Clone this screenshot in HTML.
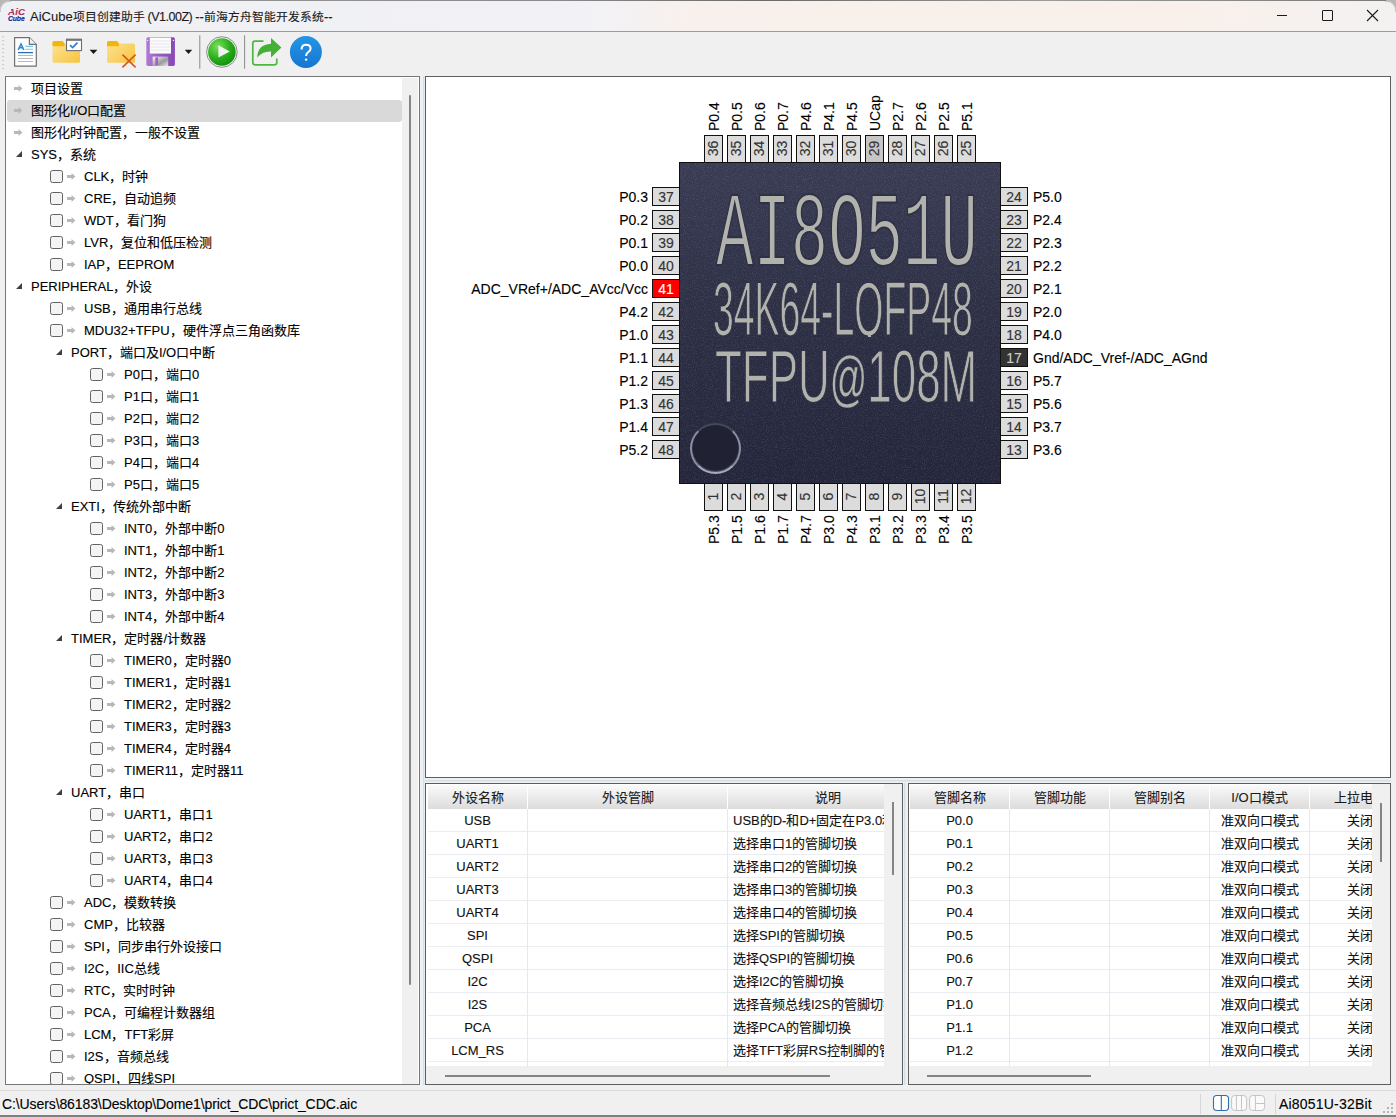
<!DOCTYPE html><html lang="zh-CN"><head><meta charset="utf-8"><style>
*{margin:0;padding:0;box-sizing:border-box}
html,body{width:1396px;height:1117px;overflow:hidden;background:#f0f0f0;font-family:"Liberation Sans",sans-serif;color:#000;-webkit-text-stroke-width:0.12px}
.abs{position:absolute}
#title{position:absolute;left:0;top:0;width:1396px;height:32px;background:linear-gradient(90deg,#eff0f4 0%,#f2f2f6 42%,#f8f0ec 50%,#f9f0eb 85%,#f3f1f1 100%);border-bottom:1px solid #9c9c9c}
.tt{position:absolute;left:30px;top:9px;font-size:13px;line-height:16px;white-space:nowrap;color:#1a1a1a}
.tc{font-size:11.8px}
.panel{position:absolute;background:#fff;border:1px solid #5e5e5e;overflow:hidden}
.row{position:absolute;height:22px;line-height:22px;font-size:13px;white-space:nowrap}
.txt{position:absolute;top:0;white-space:nowrap;font-size:13px;line-height:22px}
.cb{position:absolute;width:13px;height:13px;border:1px solid #626262;border-radius:2.5px;background:#f4f4f4;top:4px}
.arr{position:absolute;top:7px;width:9px;height:7px}
.tri{position:absolute;top:7px;width:0;height:0;border-style:solid;border-width:0 0 6px 6px;border-color:transparent transparent #404040 transparent}
.pin{position:absolute;border:1px solid #111;background:#dcdcdc;color:#333;font-size:14px;text-align:center}
.pl{position:absolute;font-size:14px;white-space:nowrap;line-height:16px;letter-spacing:0}
.hdr{position:absolute;top:1px;height:24px;background:linear-gradient(#fafafa,#dcdcdc);font-size:13px;line-height:26px;text-align:center;white-space:nowrap;overflow:hidden;color:#1a1a1a}
.cell{position:absolute;height:23px;line-height:22px;font-size:13px;white-space:nowrap;overflow:hidden;color:#111}
.gh{position:absolute;height:1px;background:#e9edf2}
.gv{position:absolute;width:1px;background:#e4e8ef}
</style></head><body>
<div id="title">
<div class="abs" style="left:8px;top:7px;font-style:italic;font-weight:bold;font-size:9.6px;line-height:10px;color:#b42c58;letter-spacing:0.2px">AiC</div>
<div class="abs" style="left:8px;top:15px;font-style:italic;font-weight:bold;font-size:6.8px;line-height:8px;color:#1a1a8a;letter-spacing:-0.1px">Cube</div>
<div class="tt">AiCube<span class="tc">项目创建助手</span><span style="font-size:12.5px;letter-spacing:-0.5px"> (V1.00Z) </span>--<span class="tc">前海方舟智能开发系统</span>--</div>
<div class="abs" style="left:1277px;top:15px;width:10px;height:1px;background:#1a1a1a"></div>
<div class="abs" style="left:1322px;top:10px;width:11px;height:11px;border:1px solid #1a1a1a;border-radius:1px"></div>
<svg class="abs" style="left:1366px;top:9px" width="13" height="13"><path d="M1 1L12 12M12 1L1 12" stroke="#1a1a1a" stroke-width="1.1"/></svg>
<div class="abs" style="left:0;top:0;width:1396px;height:1px;background:linear-gradient(90deg,#9a9a9a,#8a8a8a 40%,#6a6a6a 55%,#9a9a9a 75%,#7a7a7a)"></div>
<div class="abs" style="left:1386px;top:0;width:10px;height:10px;background:#b8b8b8"></div>
<div class="abs" style="left:0;top:0;width:10px;height:10px;background:#b8b8b8"></div>
<div class="abs" style="left:0;top:1px;width:11px;height:11px;border-top-left-radius:9px;border-top:1px solid #c8c8c8;border-left:1px solid #c8c8c8;background:#eff0f4"></div>
<div class="abs" style="left:1385px;top:1px;width:11px;height:11px;border-top-right-radius:9px;border-top:1px solid #c8c8c8;border-right:1px solid #c8c8c8;background:#f3f0f0"></div>
</div>
<svg class="abs" style="left:0;top:32px" width="340" height="44" viewBox="0 32 340 44">
<defs>
<linearGradient id="fold" x1="0" y1="0" x2="1" y2="1"><stop offset="0" stop-color="#fde49a"/><stop offset="1" stop-color="#f7c43c"/></linearGradient>
<radialGradient id="grn" cx="0.35" cy="0.3" r="0.8"><stop offset="0" stop-color="#7be05a"/><stop offset="0.55" stop-color="#2aae1c"/><stop offset="1" stop-color="#108a0a"/></radialGradient>
<linearGradient id="blu" x1="0" y1="0" x2="0" y2="1"><stop offset="0" stop-color="#2596e6"/><stop offset="1" stop-color="#1676cf"/></linearGradient>
<linearGradient id="pur" x1="0" y1="0" x2="1" y2="0"><stop offset="0" stop-color="#b07ad6"/><stop offset="0.5" stop-color="#9558c2"/><stop offset="1" stop-color="#8848b8"/></linearGradient>
<linearGradient id="shut" x1="0" y1="0" x2="1" y2="1"><stop offset="0" stop-color="#f4f4f4"/><stop offset="0.6" stop-color="#9a9a9a"/><stop offset="1" stop-color="#e8e8e8"/></linearGradient>
</defs>
<g fill="#b8b8b8"><rect x="2.5" y="36" width="1.2" height="1.2"/><rect x="2.5" y="40" width="1.2" height="1.2"/><rect x="2.5" y="44" width="1.2" height="1.2"/><rect x="2.5" y="48" width="1.2" height="1.2"/><rect x="2.5" y="52" width="1.2" height="1.2"/><rect x="2.5" y="56" width="1.2" height="1.2"/><rect x="2.5" y="60" width="1.2" height="1.2"/><rect x="2.5" y="64" width="1.2" height="1.2"/><rect x="2.5" y="68" width="1.2" height="1.2"/></g>
<!-- new doc -->
<path d="M14.6 37.6H29.4L36.3 44.4V66.2H14.6Z" fill="#fff" stroke="#707070" stroke-width="1.2"/>
<path d="M29.4 37.6V44.4H36.3" fill="#f0f0f0" stroke="#707070" stroke-width="1.2"/>
<path d="M18.2 49.9L21 44L23.8 49.9M19.3 47.8H22.7" fill="none" stroke="#2f86d4" stroke-width="1.5"/>
<g stroke-width="1.1"><path d="M25.3 46.4H33M25.3 49.3H33" stroke="#7cc8ee"/><path d="M18 52.6H33" stroke="#2a6cb4" stroke-width="1.3"/><path d="M18 55.5H33M18 58.5H33M18 61.5H33" stroke="#b8b8b8"/></g>
<!-- folder check -->
<path d="M52.5 42.5Q52.5 41 54 41H62.5L64.5 43.5H78.5Q80 43.5 80 45V61.5Q80 62.8 78.5 62.8H54Q52.5 62.8 52.5 61.5Z" fill="url(#fold)"/>
<path d="M52.5 42.5Q52.5 41 54 41H62.5L64.5 43.5V46.3H52.5Z" fill="#f3b40c"/>
<rect x="66.5" y="39.2" width="15" height="11.4" fill="#fff" stroke="#6e6e6e" stroke-width="1.1"/>
<rect x="66.5" y="39.2" width="15" height="1.6" fill="#6e6e6e"/>
<path d="M70 45.2L72.6 47.6L77.5 42.6" fill="none" stroke="#2a7fd0" stroke-width="1.6"/>
<path d="M89.6 49.8H97.4L93.5 54Z" fill="#1a1a1a"/>
<!-- folder x -->
<path d="M107 42.5Q107 41 108.5 41H117L119 43.5H133.5Q135 43.5 135 45V61.5Q135 62.8 133.5 62.8H108.5Q107 62.8 107 61.5Z" fill="url(#fold)"/>
<path d="M107 42.5Q107 41 108.5 41H117L119 43.5V46.3H107Z" fill="#f3b40c"/>
<path d="M122.4 54.7L135.6 67.3M135.6 54.7L122.4 67.3" stroke="#d8551e" stroke-width="1.6"/>
<!-- floppy -->
<rect x="146.3" y="37.2" width="28.6" height="28.8" rx="1.8" fill="url(#pur)"/>
<rect x="149.8" y="37.6" width="21.2" height="16" fill="#fbfbfb"/>
<g stroke="#e2e2ea" stroke-width="0.8"><path d="M150.5 41H170.3M150.5 44H170.3M150.5 47H170.3M150.5 50H170.3"/></g>
<rect x="152.6" y="56.6" width="15.6" height="9.4" fill="url(#shut)"/>
<rect x="155.4" y="57.4" width="2.6" height="7.6" fill="#9a62c6"/>
<circle cx="147.7" cy="40.4" r="0.6" fill="#fff"/><circle cx="173.3" cy="40.4" r="0.6" fill="#fff"/>
<path d="M184.8 49.8H192.2L188.5 53.9Z" fill="#1a1a1a"/>
<rect x="199.3" y="35.3" width="1" height="33.4" fill="#8a8a8a"/>
<!-- play -->
<circle cx="221.9" cy="52" r="15.3" fill="#f4f4f4" stroke="#8a8a8a" stroke-width="1"/>
<circle cx="221.9" cy="52" r="13.8" fill="url(#grn)"/>
<path d="M218.4 45.2L229.8 51.4L218.4 57.6Z" fill="#f2f2f2"/>
<rect x="244.1" y="35.3" width="1" height="33.4" fill="#8a8a8a"/>
<!-- share -->
<path d="M263.5 41.2H255Q252.8 41.2 252.8 43.4V62.6Q252.8 64.8 255 64.8H274.6Q276.8 64.8 276.8 62.6V58.6" fill="none" stroke="#4cb83e" stroke-width="1.7"/>
<path d="M257.2 57.6Q257.6 44.6 271 43.8V38L281.4 47.6L271 57.4V51.4Q262.4 51 257.2 57.6Z" fill="#44b036"/>
<!-- help -->
<circle cx="305.9" cy="52" r="16" fill="url(#blu)"/>
<path d="M301.6 49.4Q301.6 44.8 306 44.8Q310.6 44.8 310.6 48.6Q310.6 50.8 308.2 52.2Q306.1 53.4 306.1 56" fill="none" stroke="#fff" stroke-width="2"/>
<circle cx="306.1" cy="59.6" r="1.2" fill="#fff"/>
</svg>
<svg class="abs" style="left:1205px;top:1090px" width="70" height="25" viewBox="1205 1090 70 25">
<rect x="1213.5" y="1095.5" width="15" height="15" rx="3.2" fill="#fff" stroke="#2c6fb2" stroke-width="1.1"/><path d="M1221.3 1095.5V1110.5" stroke="#2c6fb2" stroke-width="1.1"/>
<rect x="1231.6" y="1095.5" width="15" height="15" rx="3.2" fill="#fafafa" stroke="#c4c4c4" stroke-width="1"/><path d="M1236.4 1095.5V1110.5M1241.5 1095.5V1110.5" stroke="#c4c4c4" stroke-width="1"/>
<rect x="1249.6" y="1095.5" width="15" height="15" rx="3.2" fill="#fafafa" stroke="#c4c4c4" stroke-width="1"/><path d="M1255.4 1095.5V1110.5M1255.4 1103.5H1264.6" stroke="#c4c4c4" stroke-width="1"/>
</svg>
<svg class="abs" style="left:1380px;top:1100px" width="16" height="16"><g fill="#b4b4b4"><rect x="11" y="3" width="2" height="2"/><rect x="7" y="7" width="2" height="2"/><rect x="11" y="7" width="2" height="2"/><rect x="3" y="11" width="2" height="2"/><rect x="7" y="11" width="2" height="2"/><rect x="11" y="11" width="2" height="2"/></g></svg>
<div class="panel" style="left:5px;top:76px;width:415px;height:1009px;border-color:#76767a">
<div class="row" style="left:0;top:1px;width:400px">
<svg class="arr" style="left:8px" width="9" height="7" viewBox="0 0 9 7"><path d="M0 2H4.6V0L8.4 3.5L4.6 7V5H0Z" fill="#b8b8b8"/></svg>
<div class="txt" style="left:25px">项目设置</div>
</div>
<div class="abs" style="left:1px;top:23px;width:395px;height:22px;background:#d9d9d9;border-radius:3px"></div>
<div class="row" style="left:0;top:23px;width:400px">
<svg class="arr" style="left:8px" width="9" height="7" viewBox="0 0 9 7"><path d="M0 2H4.6V0L8.4 3.5L4.6 7V5H0Z" fill="#b8b8b8"/></svg>
<div class="txt" style="left:25px">图形化I/O口配置</div>
</div>
<div class="row" style="left:0;top:45px;width:400px">
<svg class="arr" style="left:8px" width="9" height="7" viewBox="0 0 9 7"><path d="M0 2H4.6V0L8.4 3.5L4.6 7V5H0Z" fill="#b8b8b8"/></svg>
<div class="txt" style="left:25px">图形化时钟配置，一般不设置</div>
</div>
<div class="row" style="left:0;top:67px;width:400px">
<div class="tri" style="left:10px"></div>
<div class="txt" style="left:25px">SYS，系统</div>
</div>
<div class="row" style="left:0;top:89px;width:400px">
<div class="cb" style="left:44px"></div>
<svg class="arr" style="left:61px" width="9" height="7" viewBox="0 0 9 7"><path d="M0 2H4.6V0L8.4 3.5L4.6 7V5H0Z" fill="#b8b8b8"/></svg>
<div class="txt" style="left:78px">CLK，时钟</div>
</div>
<div class="row" style="left:0;top:111px;width:400px">
<div class="cb" style="left:44px"></div>
<svg class="arr" style="left:61px" width="9" height="7" viewBox="0 0 9 7"><path d="M0 2H4.6V0L8.4 3.5L4.6 7V5H0Z" fill="#b8b8b8"/></svg>
<div class="txt" style="left:78px">CRE，自动追频</div>
</div>
<div class="row" style="left:0;top:133px;width:400px">
<div class="cb" style="left:44px"></div>
<svg class="arr" style="left:61px" width="9" height="7" viewBox="0 0 9 7"><path d="M0 2H4.6V0L8.4 3.5L4.6 7V5H0Z" fill="#b8b8b8"/></svg>
<div class="txt" style="left:78px">WDT，看门狗</div>
</div>
<div class="row" style="left:0;top:155px;width:400px">
<div class="cb" style="left:44px"></div>
<svg class="arr" style="left:61px" width="9" height="7" viewBox="0 0 9 7"><path d="M0 2H4.6V0L8.4 3.5L4.6 7V5H0Z" fill="#b8b8b8"/></svg>
<div class="txt" style="left:78px">LVR，复位和低压检测</div>
</div>
<div class="row" style="left:0;top:177px;width:400px">
<div class="cb" style="left:44px"></div>
<svg class="arr" style="left:61px" width="9" height="7" viewBox="0 0 9 7"><path d="M0 2H4.6V0L8.4 3.5L4.6 7V5H0Z" fill="#b8b8b8"/></svg>
<div class="txt" style="left:78px">IAP，EEPROM</div>
</div>
<div class="row" style="left:0;top:199px;width:400px">
<div class="tri" style="left:10px"></div>
<div class="txt" style="left:25px">PERIPHERAL，外设</div>
</div>
<div class="row" style="left:0;top:221px;width:400px">
<div class="cb" style="left:44px"></div>
<svg class="arr" style="left:61px" width="9" height="7" viewBox="0 0 9 7"><path d="M0 2H4.6V0L8.4 3.5L4.6 7V5H0Z" fill="#b8b8b8"/></svg>
<div class="txt" style="left:78px">USB，通用串行总线</div>
</div>
<div class="row" style="left:0;top:243px;width:400px">
<div class="cb" style="left:44px"></div>
<svg class="arr" style="left:61px" width="9" height="7" viewBox="0 0 9 7"><path d="M0 2H4.6V0L8.4 3.5L4.6 7V5H0Z" fill="#b8b8b8"/></svg>
<div class="txt" style="left:78px">MDU32+TFPU，硬件浮点三角函数库</div>
</div>
<div class="row" style="left:0;top:265px;width:400px">
<div class="tri" style="left:50px"></div>
<div class="txt" style="left:65px">PORT，端口及I/O口中断</div>
</div>
<div class="row" style="left:0;top:287px;width:400px">
<div class="cb" style="left:84px"></div>
<svg class="arr" style="left:101px" width="9" height="7" viewBox="0 0 9 7"><path d="M0 2H4.6V0L8.4 3.5L4.6 7V5H0Z" fill="#b8b8b8"/></svg>
<div class="txt" style="left:118px">P0口，端口0</div>
</div>
<div class="row" style="left:0;top:309px;width:400px">
<div class="cb" style="left:84px"></div>
<svg class="arr" style="left:101px" width="9" height="7" viewBox="0 0 9 7"><path d="M0 2H4.6V0L8.4 3.5L4.6 7V5H0Z" fill="#b8b8b8"/></svg>
<div class="txt" style="left:118px">P1口，端口1</div>
</div>
<div class="row" style="left:0;top:331px;width:400px">
<div class="cb" style="left:84px"></div>
<svg class="arr" style="left:101px" width="9" height="7" viewBox="0 0 9 7"><path d="M0 2H4.6V0L8.4 3.5L4.6 7V5H0Z" fill="#b8b8b8"/></svg>
<div class="txt" style="left:118px">P2口，端口2</div>
</div>
<div class="row" style="left:0;top:353px;width:400px">
<div class="cb" style="left:84px"></div>
<svg class="arr" style="left:101px" width="9" height="7" viewBox="0 0 9 7"><path d="M0 2H4.6V0L8.4 3.5L4.6 7V5H0Z" fill="#b8b8b8"/></svg>
<div class="txt" style="left:118px">P3口，端口3</div>
</div>
<div class="row" style="left:0;top:375px;width:400px">
<div class="cb" style="left:84px"></div>
<svg class="arr" style="left:101px" width="9" height="7" viewBox="0 0 9 7"><path d="M0 2H4.6V0L8.4 3.5L4.6 7V5H0Z" fill="#b8b8b8"/></svg>
<div class="txt" style="left:118px">P4口，端口4</div>
</div>
<div class="row" style="left:0;top:397px;width:400px">
<div class="cb" style="left:84px"></div>
<svg class="arr" style="left:101px" width="9" height="7" viewBox="0 0 9 7"><path d="M0 2H4.6V0L8.4 3.5L4.6 7V5H0Z" fill="#b8b8b8"/></svg>
<div class="txt" style="left:118px">P5口，端口5</div>
</div>
<div class="row" style="left:0;top:419px;width:400px">
<div class="tri" style="left:50px"></div>
<div class="txt" style="left:65px">EXTI，传统外部中断</div>
</div>
<div class="row" style="left:0;top:441px;width:400px">
<div class="cb" style="left:84px"></div>
<svg class="arr" style="left:101px" width="9" height="7" viewBox="0 0 9 7"><path d="M0 2H4.6V0L8.4 3.5L4.6 7V5H0Z" fill="#b8b8b8"/></svg>
<div class="txt" style="left:118px">INT0，外部中断0</div>
</div>
<div class="row" style="left:0;top:463px;width:400px">
<div class="cb" style="left:84px"></div>
<svg class="arr" style="left:101px" width="9" height="7" viewBox="0 0 9 7"><path d="M0 2H4.6V0L8.4 3.5L4.6 7V5H0Z" fill="#b8b8b8"/></svg>
<div class="txt" style="left:118px">INT1，外部中断1</div>
</div>
<div class="row" style="left:0;top:485px;width:400px">
<div class="cb" style="left:84px"></div>
<svg class="arr" style="left:101px" width="9" height="7" viewBox="0 0 9 7"><path d="M0 2H4.6V0L8.4 3.5L4.6 7V5H0Z" fill="#b8b8b8"/></svg>
<div class="txt" style="left:118px">INT2，外部中断2</div>
</div>
<div class="row" style="left:0;top:507px;width:400px">
<div class="cb" style="left:84px"></div>
<svg class="arr" style="left:101px" width="9" height="7" viewBox="0 0 9 7"><path d="M0 2H4.6V0L8.4 3.5L4.6 7V5H0Z" fill="#b8b8b8"/></svg>
<div class="txt" style="left:118px">INT3，外部中断3</div>
</div>
<div class="row" style="left:0;top:529px;width:400px">
<div class="cb" style="left:84px"></div>
<svg class="arr" style="left:101px" width="9" height="7" viewBox="0 0 9 7"><path d="M0 2H4.6V0L8.4 3.5L4.6 7V5H0Z" fill="#b8b8b8"/></svg>
<div class="txt" style="left:118px">INT4，外部中断4</div>
</div>
<div class="row" style="left:0;top:551px;width:400px">
<div class="tri" style="left:50px"></div>
<div class="txt" style="left:65px">TIMER，定时器/计数器</div>
</div>
<div class="row" style="left:0;top:573px;width:400px">
<div class="cb" style="left:84px"></div>
<svg class="arr" style="left:101px" width="9" height="7" viewBox="0 0 9 7"><path d="M0 2H4.6V0L8.4 3.5L4.6 7V5H0Z" fill="#b8b8b8"/></svg>
<div class="txt" style="left:118px">TIMER0，定时器0</div>
</div>
<div class="row" style="left:0;top:595px;width:400px">
<div class="cb" style="left:84px"></div>
<svg class="arr" style="left:101px" width="9" height="7" viewBox="0 0 9 7"><path d="M0 2H4.6V0L8.4 3.5L4.6 7V5H0Z" fill="#b8b8b8"/></svg>
<div class="txt" style="left:118px">TIMER1，定时器1</div>
</div>
<div class="row" style="left:0;top:617px;width:400px">
<div class="cb" style="left:84px"></div>
<svg class="arr" style="left:101px" width="9" height="7" viewBox="0 0 9 7"><path d="M0 2H4.6V0L8.4 3.5L4.6 7V5H0Z" fill="#b8b8b8"/></svg>
<div class="txt" style="left:118px">TIMER2，定时器2</div>
</div>
<div class="row" style="left:0;top:639px;width:400px">
<div class="cb" style="left:84px"></div>
<svg class="arr" style="left:101px" width="9" height="7" viewBox="0 0 9 7"><path d="M0 2H4.6V0L8.4 3.5L4.6 7V5H0Z" fill="#b8b8b8"/></svg>
<div class="txt" style="left:118px">TIMER3，定时器3</div>
</div>
<div class="row" style="left:0;top:661px;width:400px">
<div class="cb" style="left:84px"></div>
<svg class="arr" style="left:101px" width="9" height="7" viewBox="0 0 9 7"><path d="M0 2H4.6V0L8.4 3.5L4.6 7V5H0Z" fill="#b8b8b8"/></svg>
<div class="txt" style="left:118px">TIMER4，定时器4</div>
</div>
<div class="row" style="left:0;top:683px;width:400px">
<div class="cb" style="left:84px"></div>
<svg class="arr" style="left:101px" width="9" height="7" viewBox="0 0 9 7"><path d="M0 2H4.6V0L8.4 3.5L4.6 7V5H0Z" fill="#b8b8b8"/></svg>
<div class="txt" style="left:118px">TIMER11，定时器11</div>
</div>
<div class="row" style="left:0;top:705px;width:400px">
<div class="tri" style="left:50px"></div>
<div class="txt" style="left:65px">UART，串口</div>
</div>
<div class="row" style="left:0;top:727px;width:400px">
<div class="cb" style="left:84px"></div>
<svg class="arr" style="left:101px" width="9" height="7" viewBox="0 0 9 7"><path d="M0 2H4.6V0L8.4 3.5L4.6 7V5H0Z" fill="#b8b8b8"/></svg>
<div class="txt" style="left:118px">UART1，串口1</div>
</div>
<div class="row" style="left:0;top:749px;width:400px">
<div class="cb" style="left:84px"></div>
<svg class="arr" style="left:101px" width="9" height="7" viewBox="0 0 9 7"><path d="M0 2H4.6V0L8.4 3.5L4.6 7V5H0Z" fill="#b8b8b8"/></svg>
<div class="txt" style="left:118px">UART2，串口2</div>
</div>
<div class="row" style="left:0;top:771px;width:400px">
<div class="cb" style="left:84px"></div>
<svg class="arr" style="left:101px" width="9" height="7" viewBox="0 0 9 7"><path d="M0 2H4.6V0L8.4 3.5L4.6 7V5H0Z" fill="#b8b8b8"/></svg>
<div class="txt" style="left:118px">UART3，串口3</div>
</div>
<div class="row" style="left:0;top:793px;width:400px">
<div class="cb" style="left:84px"></div>
<svg class="arr" style="left:101px" width="9" height="7" viewBox="0 0 9 7"><path d="M0 2H4.6V0L8.4 3.5L4.6 7V5H0Z" fill="#b8b8b8"/></svg>
<div class="txt" style="left:118px">UART4，串口4</div>
</div>
<div class="row" style="left:0;top:815px;width:400px">
<div class="cb" style="left:44px"></div>
<svg class="arr" style="left:61px" width="9" height="7" viewBox="0 0 9 7"><path d="M0 2H4.6V0L8.4 3.5L4.6 7V5H0Z" fill="#b8b8b8"/></svg>
<div class="txt" style="left:78px">ADC，模数转换</div>
</div>
<div class="row" style="left:0;top:837px;width:400px">
<div class="cb" style="left:44px"></div>
<svg class="arr" style="left:61px" width="9" height="7" viewBox="0 0 9 7"><path d="M0 2H4.6V0L8.4 3.5L4.6 7V5H0Z" fill="#b8b8b8"/></svg>
<div class="txt" style="left:78px">CMP，比较器</div>
</div>
<div class="row" style="left:0;top:859px;width:400px">
<div class="cb" style="left:44px"></div>
<svg class="arr" style="left:61px" width="9" height="7" viewBox="0 0 9 7"><path d="M0 2H4.6V0L8.4 3.5L4.6 7V5H0Z" fill="#b8b8b8"/></svg>
<div class="txt" style="left:78px">SPI，同步串行外设接口</div>
</div>
<div class="row" style="left:0;top:881px;width:400px">
<div class="cb" style="left:44px"></div>
<svg class="arr" style="left:61px" width="9" height="7" viewBox="0 0 9 7"><path d="M0 2H4.6V0L8.4 3.5L4.6 7V5H0Z" fill="#b8b8b8"/></svg>
<div class="txt" style="left:78px">I2C，IIC总线</div>
</div>
<div class="row" style="left:0;top:903px;width:400px">
<div class="cb" style="left:44px"></div>
<svg class="arr" style="left:61px" width="9" height="7" viewBox="0 0 9 7"><path d="M0 2H4.6V0L8.4 3.5L4.6 7V5H0Z" fill="#b8b8b8"/></svg>
<div class="txt" style="left:78px">RTC，实时时钟</div>
</div>
<div class="row" style="left:0;top:925px;width:400px">
<div class="cb" style="left:44px"></div>
<svg class="arr" style="left:61px" width="9" height="7" viewBox="0 0 9 7"><path d="M0 2H4.6V0L8.4 3.5L4.6 7V5H0Z" fill="#b8b8b8"/></svg>
<div class="txt" style="left:78px">PCA，可编程计数器组</div>
</div>
<div class="row" style="left:0;top:947px;width:400px">
<div class="cb" style="left:44px"></div>
<svg class="arr" style="left:61px" width="9" height="7" viewBox="0 0 9 7"><path d="M0 2H4.6V0L8.4 3.5L4.6 7V5H0Z" fill="#b8b8b8"/></svg>
<div class="txt" style="left:78px">LCM，TFT彩屏</div>
</div>
<div class="row" style="left:0;top:969px;width:400px">
<div class="cb" style="left:44px"></div>
<svg class="arr" style="left:61px" width="9" height="7" viewBox="0 0 9 7"><path d="M0 2H4.6V0L8.4 3.5L4.6 7V5H0Z" fill="#b8b8b8"/></svg>
<div class="txt" style="left:78px">I2S，音频总线</div>
</div>
<div class="row" style="left:0;top:991px;width:400px">
<div class="cb" style="left:44px"></div>
<svg class="arr" style="left:61px" width="9" height="7" viewBox="0 0 9 7"><path d="M0 2H4.6V0L8.4 3.5L4.6 7V5H0Z" fill="#b8b8b8"/></svg>
<div class="txt" style="left:78px">QSPI，四线SPI</div>
</div>
<div class="abs" style="left:396px;top:1px;width:16px;height:1006px;background:#f0f0f0"></div>
<div class="abs" style="left:403px;top:18px;width:2px;height:890px;background:#858585;border-radius:1px"></div>
</div>
<div class="abs" style="left:423px;top:76px;width:2px;height:1009px;background:linear-gradient(90deg,#c6dae4,#e6f3f9)"></div>
<div class="abs" style="left:425px;top:780px;width:966px;height:2px;background:linear-gradient(#c8d9e2,#e6f2f8)"></div>
<div class="abs" style="left:904px;top:783px;width:2px;height:302px;background:linear-gradient(90deg,#c6dae4,#e6f3f9)"></div>
<div class="panel" style="left:425px;top:76px;width:966px;height:702px">
<div class="abs" style="left:253px;top:85px;width:322px;height:322px;background:linear-gradient(#383b52,#2d3045 45%,#23253a);border:1px solid #111;overflow:hidden">
<svg class="abs" style="left:0;top:0;opacity:0.22" width="320" height="320"><filter id="nz"><feTurbulence type="fractalNoise" baseFrequency="0.9" numOctaves="2" seed="3"/><feColorMatrix values="0 0 0 0 0.75  0 0 0 0 0.77  0 0 0 0 0.9  0 0 0 1.6 -0.75"/></filter><rect width="320" height="320" filter="url(#nz)"/></svg>
<div class="abs" style="left:10px;top:260px;width:51px;height:51px;border-radius:50%;border:2px solid #a8aabb;border-top-color:#454859;border-right-color:#8c8ea0;border-left-color:#8c8ea0;background:#202233;box-shadow:inset 0 -1px 1px rgba(200,200,220,.35)"></div>
<div style="position:absolute;white-space:nowrap;line-height:1;color:#b2b2ac;-webkit-text-stroke:2px #2e3145;transform-origin:0 0;left:36.0px;top:21.4px;font-family:'Liberation Mono',monospace;font-size:106px;transform:scaleX(0.588)">AI8O51U</div>
<div style="position:absolute;white-space:nowrap;line-height:1;color:#b2b2ac;-webkit-text-stroke:2px #2e3145;transform-origin:0 0;left:32.5px;top:108.0px;font-family:'Liberation Sans',sans-serif;font-size:75.7px;height:66px;-webkit-text-stroke-width:1.2px;overflow:hidden;transform:scaleX(0.494)">34K64-LQFP48</div>
<div style="position:absolute;white-space:nowrap;line-height:1;color:#b2b2ac;-webkit-text-stroke:2px #2e3145;transform-origin:0 0;left:35.0px;top:177.2px;font-family:'Liberation Sans',sans-serif;font-size:73.5px;-webkit-text-stroke-width:1.2px;transform:scaleX(0.598)">TFPU<span style="font-size:84%;vertical-align:3px;-webkit-text-stroke-width:0.4px">@</span>108M</div>
</div>
<div class="pin" style="left:278px;top:58px;width:19px;height:28px;"><div class="abs" style="left:-5px;top:4px;width:27px;line-height:17px;transform:rotate(-90deg)">36</div></div>
<div class="pl" style="left:287.5px;top:54px;transform-origin:0 0;transform:rotate(-90deg) translate(0,-8px)">P0.4</div>
<div class="pin" style="left:278px;top:406px;width:19px;height:28px;"><div class="abs" style="left:-5px;top:4px;width:27px;line-height:17px;transform:rotate(-90deg)">1</div></div>
<div class="pl" style="left:287.5px;top:467px;transform-origin:0 0;transform:rotate(-90deg) translate(0,-8px)">P5.3</div>
<div class="pin" style="left:301px;top:58px;width:19px;height:28px;"><div class="abs" style="left:-5px;top:4px;width:27px;line-height:17px;transform:rotate(-90deg)">35</div></div>
<div class="pl" style="left:310.5px;top:54px;transform-origin:0 0;transform:rotate(-90deg) translate(0,-8px)">P0.5</div>
<div class="pin" style="left:301px;top:406px;width:19px;height:28px;"><div class="abs" style="left:-5px;top:4px;width:27px;line-height:17px;transform:rotate(-90deg)">2</div></div>
<div class="pl" style="left:310.5px;top:467px;transform-origin:0 0;transform:rotate(-90deg) translate(0,-8px)">P1.5</div>
<div class="pin" style="left:324px;top:58px;width:19px;height:28px;"><div class="abs" style="left:-5px;top:4px;width:27px;line-height:17px;transform:rotate(-90deg)">34</div></div>
<div class="pl" style="left:333.5px;top:54px;transform-origin:0 0;transform:rotate(-90deg) translate(0,-8px)">P0.6</div>
<div class="pin" style="left:324px;top:406px;width:19px;height:28px;"><div class="abs" style="left:-5px;top:4px;width:27px;line-height:17px;transform:rotate(-90deg)">3</div></div>
<div class="pl" style="left:333.5px;top:467px;transform-origin:0 0;transform:rotate(-90deg) translate(0,-8px)">P1.6</div>
<div class="pin" style="left:347px;top:58px;width:19px;height:28px;"><div class="abs" style="left:-5px;top:4px;width:27px;line-height:17px;transform:rotate(-90deg)">33</div></div>
<div class="pl" style="left:356.5px;top:54px;transform-origin:0 0;transform:rotate(-90deg) translate(0,-8px)">P0.7</div>
<div class="pin" style="left:347px;top:406px;width:19px;height:28px;"><div class="abs" style="left:-5px;top:4px;width:27px;line-height:17px;transform:rotate(-90deg)">4</div></div>
<div class="pl" style="left:356.5px;top:467px;transform-origin:0 0;transform:rotate(-90deg) translate(0,-8px)">P1.7</div>
<div class="pin" style="left:370px;top:58px;width:19px;height:28px;"><div class="abs" style="left:-5px;top:4px;width:27px;line-height:17px;transform:rotate(-90deg)">32</div></div>
<div class="pl" style="left:379.5px;top:54px;transform-origin:0 0;transform:rotate(-90deg) translate(0,-8px)">P4.6</div>
<div class="pin" style="left:370px;top:406px;width:19px;height:28px;"><div class="abs" style="left:-5px;top:4px;width:27px;line-height:17px;transform:rotate(-90deg)">5</div></div>
<div class="pl" style="left:379.5px;top:467px;transform-origin:0 0;transform:rotate(-90deg) translate(0,-8px)">P4.7</div>
<div class="pin" style="left:393px;top:58px;width:19px;height:28px;"><div class="abs" style="left:-5px;top:4px;width:27px;line-height:17px;transform:rotate(-90deg)">31</div></div>
<div class="pl" style="left:402.5px;top:54px;transform-origin:0 0;transform:rotate(-90deg) translate(0,-8px)">P4.1</div>
<div class="pin" style="left:393px;top:406px;width:19px;height:28px;"><div class="abs" style="left:-5px;top:4px;width:27px;line-height:17px;transform:rotate(-90deg)">6</div></div>
<div class="pl" style="left:402.5px;top:467px;transform-origin:0 0;transform:rotate(-90deg) translate(0,-8px)">P3.0</div>
<div class="pin" style="left:416px;top:58px;width:19px;height:28px;"><div class="abs" style="left:-5px;top:4px;width:27px;line-height:17px;transform:rotate(-90deg)">30</div></div>
<div class="pl" style="left:425.5px;top:54px;transform-origin:0 0;transform:rotate(-90deg) translate(0,-8px)">P4.5</div>
<div class="pin" style="left:416px;top:406px;width:19px;height:28px;"><div class="abs" style="left:-5px;top:4px;width:27px;line-height:17px;transform:rotate(-90deg)">7</div></div>
<div class="pl" style="left:425.5px;top:467px;transform-origin:0 0;transform:rotate(-90deg) translate(0,-8px)">P4.3</div>
<div class="pin" style="left:439px;top:58px;width:19px;height:28px;background:#c6c6c6;"><div class="abs" style="left:-5px;top:4px;width:27px;line-height:17px;transform:rotate(-90deg)">29</div></div>
<div class="pl" style="left:448.5px;top:54px;transform-origin:0 0;transform:rotate(-90deg) translate(0,-8px)">UCap</div>
<div class="pin" style="left:439px;top:406px;width:19px;height:28px;"><div class="abs" style="left:-5px;top:4px;width:27px;line-height:17px;transform:rotate(-90deg)">8</div></div>
<div class="pl" style="left:448.5px;top:467px;transform-origin:0 0;transform:rotate(-90deg) translate(0,-8px)">P3.1</div>
<div class="pin" style="left:462px;top:58px;width:19px;height:28px;"><div class="abs" style="left:-5px;top:4px;width:27px;line-height:17px;transform:rotate(-90deg)">28</div></div>
<div class="pl" style="left:471.5px;top:54px;transform-origin:0 0;transform:rotate(-90deg) translate(0,-8px)">P2.7</div>
<div class="pin" style="left:462px;top:406px;width:19px;height:28px;"><div class="abs" style="left:-5px;top:4px;width:27px;line-height:17px;transform:rotate(-90deg)">9</div></div>
<div class="pl" style="left:471.5px;top:467px;transform-origin:0 0;transform:rotate(-90deg) translate(0,-8px)">P3.2</div>
<div class="pin" style="left:485px;top:58px;width:19px;height:28px;"><div class="abs" style="left:-5px;top:4px;width:27px;line-height:17px;transform:rotate(-90deg)">27</div></div>
<div class="pl" style="left:494.5px;top:54px;transform-origin:0 0;transform:rotate(-90deg) translate(0,-8px)">P2.6</div>
<div class="pin" style="left:485px;top:406px;width:19px;height:28px;"><div class="abs" style="left:-5px;top:4px;width:27px;line-height:17px;transform:rotate(-90deg)">10</div></div>
<div class="pl" style="left:494.5px;top:467px;transform-origin:0 0;transform:rotate(-90deg) translate(0,-8px)">P3.3</div>
<div class="pin" style="left:508px;top:58px;width:19px;height:28px;"><div class="abs" style="left:-5px;top:4px;width:27px;line-height:17px;transform:rotate(-90deg)">26</div></div>
<div class="pl" style="left:517.5px;top:54px;transform-origin:0 0;transform:rotate(-90deg) translate(0,-8px)">P2.5</div>
<div class="pin" style="left:508px;top:406px;width:19px;height:28px;"><div class="abs" style="left:-5px;top:4px;width:27px;line-height:17px;transform:rotate(-90deg)">11</div></div>
<div class="pl" style="left:517.5px;top:467px;transform-origin:0 0;transform:rotate(-90deg) translate(0,-8px)">P3.4</div>
<div class="pin" style="left:531px;top:58px;width:19px;height:28px;"><div class="abs" style="left:-5px;top:4px;width:27px;line-height:17px;transform:rotate(-90deg)">25</div></div>
<div class="pl" style="left:540.5px;top:54px;transform-origin:0 0;transform:rotate(-90deg) translate(0,-8px)">P5.1</div>
<div class="pin" style="left:531px;top:406px;width:19px;height:28px;"><div class="abs" style="left:-5px;top:4px;width:27px;line-height:17px;transform:rotate(-90deg)">12</div></div>
<div class="pl" style="left:540.5px;top:467px;transform-origin:0 0;transform:rotate(-90deg) translate(0,-8px)">P3.5</div>
<div class="pin" style="left:226px;top:110px;width:28px;height:19px;line-height:19px;">37</div>
<div class="pl" style="right:742px;top:112px;text-align:right">P0.3</div>
<div class="pin" style="left:574px;top:110px;width:28px;height:19px;line-height:19px;">24</div>
<div class="pl" style="left:607px;top:112px">P5.0</div>
<div class="pin" style="left:226px;top:133px;width:28px;height:19px;line-height:19px;">38</div>
<div class="pl" style="right:742px;top:135px;text-align:right">P0.2</div>
<div class="pin" style="left:574px;top:133px;width:28px;height:19px;line-height:19px;">23</div>
<div class="pl" style="left:607px;top:135px">P2.4</div>
<div class="pin" style="left:226px;top:156px;width:28px;height:19px;line-height:19px;">39</div>
<div class="pl" style="right:742px;top:158px;text-align:right">P0.1</div>
<div class="pin" style="left:574px;top:156px;width:28px;height:19px;line-height:19px;">22</div>
<div class="pl" style="left:607px;top:158px">P2.3</div>
<div class="pin" style="left:226px;top:179px;width:28px;height:19px;line-height:19px;">40</div>
<div class="pl" style="right:742px;top:181px;text-align:right">P0.0</div>
<div class="pin" style="left:574px;top:179px;width:28px;height:19px;line-height:19px;">21</div>
<div class="pl" style="left:607px;top:181px">P2.2</div>
<div class="pin" style="left:226px;top:202px;width:28px;height:19px;line-height:19px;background:#ff0000;color:#fff;">41</div>
<div class="pl" style="right:742px;top:204px;text-align:right">ADC_VRef+/ADC_AVcc/Vcc</div>
<div class="pin" style="left:574px;top:202px;width:28px;height:19px;line-height:19px;">20</div>
<div class="pl" style="left:607px;top:204px">P2.1</div>
<div class="pin" style="left:226px;top:225px;width:28px;height:19px;line-height:19px;">42</div>
<div class="pl" style="right:742px;top:227px;text-align:right">P4.2</div>
<div class="pin" style="left:574px;top:225px;width:28px;height:19px;line-height:19px;">19</div>
<div class="pl" style="left:607px;top:227px">P2.0</div>
<div class="pin" style="left:226px;top:248px;width:28px;height:19px;line-height:19px;">43</div>
<div class="pl" style="right:742px;top:250px;text-align:right">P1.0</div>
<div class="pin" style="left:574px;top:248px;width:28px;height:19px;line-height:19px;">18</div>
<div class="pl" style="left:607px;top:250px">P4.0</div>
<div class="pin" style="left:226px;top:271px;width:28px;height:19px;line-height:19px;">44</div>
<div class="pl" style="right:742px;top:273px;text-align:right">P1.1</div>
<div class="pin" style="left:574px;top:271px;width:28px;height:19px;line-height:19px;background:#333;color:#ccc;">17</div>
<div class="pl" style="left:607px;top:273px">Gnd/ADC_Vref-/ADC_AGnd</div>
<div class="pin" style="left:226px;top:294px;width:28px;height:19px;line-height:19px;">45</div>
<div class="pl" style="right:742px;top:296px;text-align:right">P1.2</div>
<div class="pin" style="left:574px;top:294px;width:28px;height:19px;line-height:19px;">16</div>
<div class="pl" style="left:607px;top:296px">P5.7</div>
<div class="pin" style="left:226px;top:317px;width:28px;height:19px;line-height:19px;">46</div>
<div class="pl" style="right:742px;top:319px;text-align:right">P1.3</div>
<div class="pin" style="left:574px;top:317px;width:28px;height:19px;line-height:19px;">15</div>
<div class="pl" style="left:607px;top:319px">P5.6</div>
<div class="pin" style="left:226px;top:340px;width:28px;height:19px;line-height:19px;">47</div>
<div class="pl" style="right:742px;top:342px;text-align:right">P1.4</div>
<div class="pin" style="left:574px;top:340px;width:28px;height:19px;line-height:19px;">14</div>
<div class="pl" style="left:607px;top:342px">P3.7</div>
<div class="pin" style="left:226px;top:363px;width:28px;height:19px;line-height:19px;">48</div>
<div class="pl" style="right:742px;top:365px;text-align:right">P5.2</div>
<div class="pin" style="left:574px;top:363px;width:28px;height:19px;line-height:19px;">13</div>
<div class="pl" style="left:607px;top:365px">P3.6</div>
</div>
<div class="panel" style="left:425px;top:783px;width:478px;height:302px">
<div class="hdr" style="left:2px;width:99px">外设名称</div>
<div class="hdr" style="left:102px;width:199px">外设管脚</div>
<div class="hdr" style="left:302px;width:199px">说明</div>
<div class="cell" style="top:26px;left:2px;width:99px;text-align:center;">USB</div>
<div class="cell" style="top:26px;left:102px;width:199px;text-align:center;"></div>
<div class="cell" style="top:26px;left:302px;width:156px;padding-left:5px;">USB的D-和D+固定在P3.0和P3.1</div>
<div class="gh" style="left:2px;top:47px;width:456px"></div>
<div class="cell" style="top:49px;left:2px;width:99px;text-align:center;">UART1</div>
<div class="cell" style="top:49px;left:102px;width:199px;text-align:center;"></div>
<div class="cell" style="top:49px;left:302px;width:156px;padding-left:5px;">选择串口1的管脚切换</div>
<div class="gh" style="left:2px;top:70px;width:456px"></div>
<div class="cell" style="top:72px;left:2px;width:99px;text-align:center;">UART2</div>
<div class="cell" style="top:72px;left:102px;width:199px;text-align:center;"></div>
<div class="cell" style="top:72px;left:302px;width:156px;padding-left:5px;">选择串口2的管脚切换</div>
<div class="gh" style="left:2px;top:93px;width:456px"></div>
<div class="cell" style="top:95px;left:2px;width:99px;text-align:center;">UART3</div>
<div class="cell" style="top:95px;left:102px;width:199px;text-align:center;"></div>
<div class="cell" style="top:95px;left:302px;width:156px;padding-left:5px;">选择串口3的管脚切换</div>
<div class="gh" style="left:2px;top:116px;width:456px"></div>
<div class="cell" style="top:118px;left:2px;width:99px;text-align:center;">UART4</div>
<div class="cell" style="top:118px;left:102px;width:199px;text-align:center;"></div>
<div class="cell" style="top:118px;left:302px;width:156px;padding-left:5px;">选择串口4的管脚切换</div>
<div class="gh" style="left:2px;top:139px;width:456px"></div>
<div class="cell" style="top:141px;left:2px;width:99px;text-align:center;">SPI</div>
<div class="cell" style="top:141px;left:102px;width:199px;text-align:center;"></div>
<div class="cell" style="top:141px;left:302px;width:156px;padding-left:5px;">选择SPI的管脚切换</div>
<div class="gh" style="left:2px;top:162px;width:456px"></div>
<div class="cell" style="top:164px;left:2px;width:99px;text-align:center;">QSPI</div>
<div class="cell" style="top:164px;left:102px;width:199px;text-align:center;"></div>
<div class="cell" style="top:164px;left:302px;width:156px;padding-left:5px;">选择QSPI的管脚切换</div>
<div class="gh" style="left:2px;top:185px;width:456px"></div>
<div class="cell" style="top:187px;left:2px;width:99px;text-align:center;">I2C</div>
<div class="cell" style="top:187px;left:102px;width:199px;text-align:center;"></div>
<div class="cell" style="top:187px;left:302px;width:156px;padding-left:5px;">选择I2C的管脚切换</div>
<div class="gh" style="left:2px;top:208px;width:456px"></div>
<div class="cell" style="top:210px;left:2px;width:99px;text-align:center;">I2S</div>
<div class="cell" style="top:210px;left:102px;width:199px;text-align:center;"></div>
<div class="cell" style="top:210px;left:302px;width:156px;padding-left:5px;">选择音频总线I2S的管脚切换</div>
<div class="gh" style="left:2px;top:231px;width:456px"></div>
<div class="cell" style="top:233px;left:2px;width:99px;text-align:center;">PCA</div>
<div class="cell" style="top:233px;left:102px;width:199px;text-align:center;"></div>
<div class="cell" style="top:233px;left:302px;width:156px;padding-left:5px;">选择PCA的管脚切换</div>
<div class="gh" style="left:2px;top:254px;width:456px"></div>
<div class="cell" style="top:256px;left:2px;width:99px;text-align:center;">LCM_RS</div>
<div class="cell" style="top:256px;left:102px;width:199px;text-align:center;"></div>
<div class="cell" style="top:256px;left:302px;width:156px;padding-left:5px;">选择TFT彩屏RS控制脚的管脚切换</div>
<div class="gh" style="left:2px;top:277px;width:456px"></div>
<div class="cell" style="top:279px;left:2px;width:99px;text-align:center;"></div>
<div class="cell" style="top:279px;left:102px;width:199px;text-align:center;"></div>
<div class="cell" style="top:279px;left:302px;width:156px;padding-left:5px;"></div>
<div class="gh" style="left:2px;top:300px;width:456px"></div>
<div class="gv" style="left:101px;top:25px;height:257px"></div>
<div class="gv" style="left:301px;top:25px;height:257px"></div>
<div class="abs" style="left:458px;top:0;width:478px;height:302px;background:#f0f0f0"></div>
<div class="abs" style="left:466px;top:18px;width:2px;height:73px;background:#858585"></div>
<div class="abs" style="left:0;top:282px;width:458px;height:18px;background:#f0f0f0"></div>
<div class="abs" style="left:19px;top:291px;width:385px;height:2px;background:#858585"></div>
</div>
<div class="panel" style="left:908px;top:783px;width:483px;height:302px">
<div class="hdr" style="left:1px;width:99px">管脚名称</div>
<div class="hdr" style="left:101px;width:99px">管脚功能</div>
<div class="hdr" style="left:201px;width:99px">管脚别名</div>
<div class="hdr" style="left:301px;width:99px">I/O口模式</div>
<div class="hdr" style="left:401px;width:99px">上拉电阻</div>
<div class="cell" style="top:26px;left:1px;width:99px;text-align:center;">P0.0</div>
<div class="cell" style="top:26px;left:101px;width:99px;text-align:center;"></div>
<div class="cell" style="top:26px;left:201px;width:99px;text-align:center;"></div>
<div class="cell" style="top:26px;left:301px;width:99px;text-align:center;">准双向口模式</div>
<div class="cell" style="top:26px;left:401px;width:99px;text-align:center;">关闭</div>
<div class="gh" style="left:1px;top:47px;width:462px"></div>
<div class="cell" style="top:49px;left:1px;width:99px;text-align:center;">P0.1</div>
<div class="cell" style="top:49px;left:101px;width:99px;text-align:center;"></div>
<div class="cell" style="top:49px;left:201px;width:99px;text-align:center;"></div>
<div class="cell" style="top:49px;left:301px;width:99px;text-align:center;">准双向口模式</div>
<div class="cell" style="top:49px;left:401px;width:99px;text-align:center;">关闭</div>
<div class="gh" style="left:1px;top:70px;width:462px"></div>
<div class="cell" style="top:72px;left:1px;width:99px;text-align:center;">P0.2</div>
<div class="cell" style="top:72px;left:101px;width:99px;text-align:center;"></div>
<div class="cell" style="top:72px;left:201px;width:99px;text-align:center;"></div>
<div class="cell" style="top:72px;left:301px;width:99px;text-align:center;">准双向口模式</div>
<div class="cell" style="top:72px;left:401px;width:99px;text-align:center;">关闭</div>
<div class="gh" style="left:1px;top:93px;width:462px"></div>
<div class="cell" style="top:95px;left:1px;width:99px;text-align:center;">P0.3</div>
<div class="cell" style="top:95px;left:101px;width:99px;text-align:center;"></div>
<div class="cell" style="top:95px;left:201px;width:99px;text-align:center;"></div>
<div class="cell" style="top:95px;left:301px;width:99px;text-align:center;">准双向口模式</div>
<div class="cell" style="top:95px;left:401px;width:99px;text-align:center;">关闭</div>
<div class="gh" style="left:1px;top:116px;width:462px"></div>
<div class="cell" style="top:118px;left:1px;width:99px;text-align:center;">P0.4</div>
<div class="cell" style="top:118px;left:101px;width:99px;text-align:center;"></div>
<div class="cell" style="top:118px;left:201px;width:99px;text-align:center;"></div>
<div class="cell" style="top:118px;left:301px;width:99px;text-align:center;">准双向口模式</div>
<div class="cell" style="top:118px;left:401px;width:99px;text-align:center;">关闭</div>
<div class="gh" style="left:1px;top:139px;width:462px"></div>
<div class="cell" style="top:141px;left:1px;width:99px;text-align:center;">P0.5</div>
<div class="cell" style="top:141px;left:101px;width:99px;text-align:center;"></div>
<div class="cell" style="top:141px;left:201px;width:99px;text-align:center;"></div>
<div class="cell" style="top:141px;left:301px;width:99px;text-align:center;">准双向口模式</div>
<div class="cell" style="top:141px;left:401px;width:99px;text-align:center;">关闭</div>
<div class="gh" style="left:1px;top:162px;width:462px"></div>
<div class="cell" style="top:164px;left:1px;width:99px;text-align:center;">P0.6</div>
<div class="cell" style="top:164px;left:101px;width:99px;text-align:center;"></div>
<div class="cell" style="top:164px;left:201px;width:99px;text-align:center;"></div>
<div class="cell" style="top:164px;left:301px;width:99px;text-align:center;">准双向口模式</div>
<div class="cell" style="top:164px;left:401px;width:99px;text-align:center;">关闭</div>
<div class="gh" style="left:1px;top:185px;width:462px"></div>
<div class="cell" style="top:187px;left:1px;width:99px;text-align:center;">P0.7</div>
<div class="cell" style="top:187px;left:101px;width:99px;text-align:center;"></div>
<div class="cell" style="top:187px;left:201px;width:99px;text-align:center;"></div>
<div class="cell" style="top:187px;left:301px;width:99px;text-align:center;">准双向口模式</div>
<div class="cell" style="top:187px;left:401px;width:99px;text-align:center;">关闭</div>
<div class="gh" style="left:1px;top:208px;width:462px"></div>
<div class="cell" style="top:210px;left:1px;width:99px;text-align:center;">P1.0</div>
<div class="cell" style="top:210px;left:101px;width:99px;text-align:center;"></div>
<div class="cell" style="top:210px;left:201px;width:99px;text-align:center;"></div>
<div class="cell" style="top:210px;left:301px;width:99px;text-align:center;">准双向口模式</div>
<div class="cell" style="top:210px;left:401px;width:99px;text-align:center;">关闭</div>
<div class="gh" style="left:1px;top:231px;width:462px"></div>
<div class="cell" style="top:233px;left:1px;width:99px;text-align:center;">P1.1</div>
<div class="cell" style="top:233px;left:101px;width:99px;text-align:center;"></div>
<div class="cell" style="top:233px;left:201px;width:99px;text-align:center;"></div>
<div class="cell" style="top:233px;left:301px;width:99px;text-align:center;">准双向口模式</div>
<div class="cell" style="top:233px;left:401px;width:99px;text-align:center;">关闭</div>
<div class="gh" style="left:1px;top:254px;width:462px"></div>
<div class="cell" style="top:256px;left:1px;width:99px;text-align:center;">P1.2</div>
<div class="cell" style="top:256px;left:101px;width:99px;text-align:center;"></div>
<div class="cell" style="top:256px;left:201px;width:99px;text-align:center;"></div>
<div class="cell" style="top:256px;left:301px;width:99px;text-align:center;">准双向口模式</div>
<div class="cell" style="top:256px;left:401px;width:99px;text-align:center;">关闭</div>
<div class="gh" style="left:1px;top:277px;width:462px"></div>
<div class="cell" style="top:279px;left:1px;width:99px;text-align:center;">P1.3</div>
<div class="cell" style="top:279px;left:101px;width:99px;text-align:center;"></div>
<div class="cell" style="top:279px;left:201px;width:99px;text-align:center;"></div>
<div class="cell" style="top:279px;left:301px;width:99px;text-align:center;">准双向口模式</div>
<div class="cell" style="top:279px;left:401px;width:99px;text-align:center;">关闭</div>
<div class="gh" style="left:1px;top:300px;width:462px"></div>
<div class="gv" style="left:100px;top:25px;height:257px"></div>
<div class="gv" style="left:200px;top:25px;height:257px"></div>
<div class="gv" style="left:300px;top:25px;height:257px"></div>
<div class="gv" style="left:400px;top:25px;height:257px"></div>
<div class="abs" style="left:463px;top:0;width:483px;height:302px;background:#f0f0f0"></div>
<div class="abs" style="left:471px;top:19px;width:2px;height:59px;background:#858585"></div>
<div class="abs" style="left:0;top:282px;width:463px;height:18px;background:#f0f0f0"></div>
<div class="abs" style="left:18px;top:291px;width:164px;height:2px;background:#858585"></div>
</div>
<div class="abs" style="left:0;top:1090px;width:1396px;height:1px;background:#dadada"></div>
<div class="abs" style="left:2px;top:1096px;font-size:14px;white-space:nowrap;letter-spacing:-0.1px">C:\Users\86183\Desktop\Dome1\prict_CDC\prict_CDC.aic</div>
<div class="abs" style="left:1200px;top:1094px;width:1px;height:20px;background:#d6d6d6"></div>
<div class="abs" style="left:1275px;top:1094px;width:1px;height:20px;background:#d6d6d6"></div>
<div class="abs" style="left:1279px;top:1096px;font-size:14px;white-space:nowrap;letter-spacing:0.2px">Ai8051U-32Bit</div>
<div class="abs" style="left:0;top:1115px;width:1396px;height:2px;background:#808080"></div>
</body></html>
